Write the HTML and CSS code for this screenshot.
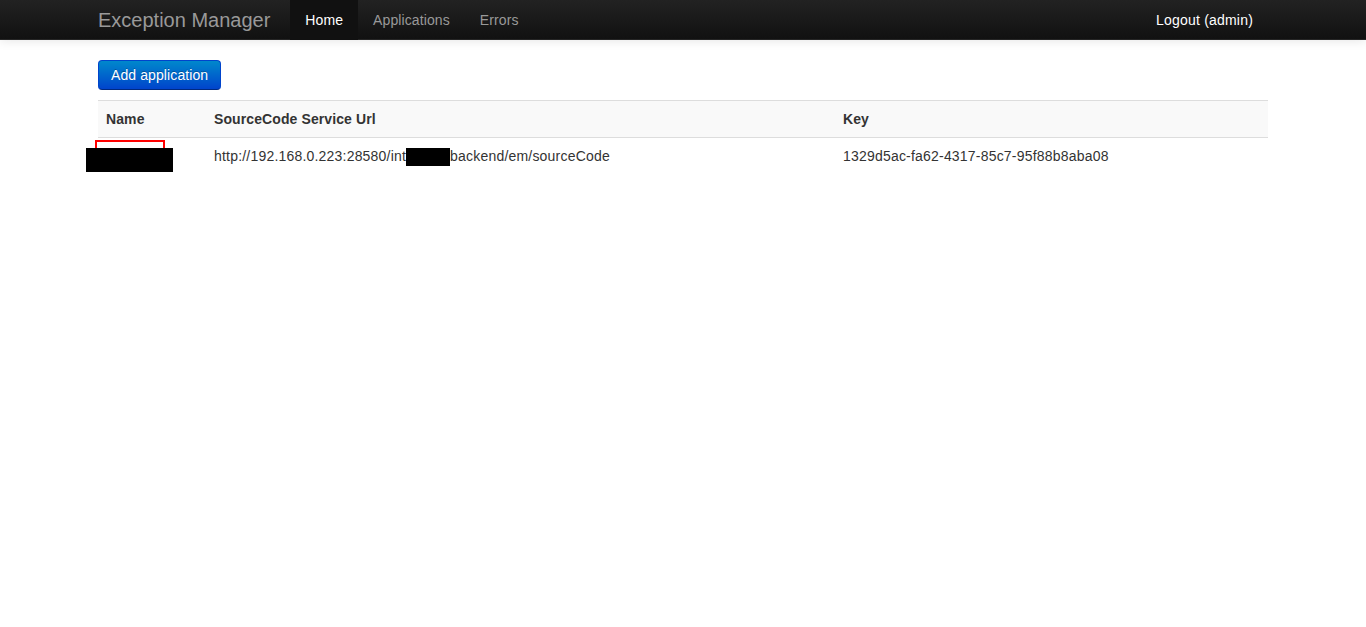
FILE: index.html
```html
<!DOCTYPE html>
<html lang="en">
<head>
    <meta charset="UTF-8">
    <title>Exception Manager - Applications</title>
    <link rel="stylesheet" href="styles.css">
</head>
<body>

    <header class="navbar">
        <div class="container navbar-inner">
            <a class="brand" href="#">Exception Manager</a>
            <ul class="nav">
                <li class="active"><a href="#">Home</a></li>
                <li><a href="#">Applications</a></li>
                <li><a href="#">Errors</a></li>
            </ul>
            <ul class="nav nav-right">
                <li><a href="#">Logout (admin)</a></li>
            </ul>
        </div>
    </header>

    <div class="container main">
        <button class="btn btn-primary">Add application</button>

        <table class="table">
            <thead>
                <tr>
                    <th class="col-name">Name</th>
                    <th class="col-url">SourceCode Service Url</th>
                    <th>Key</th>
                </tr>
            </thead>
            <tbody>
                <tr>
                    <td>
                        <span class="name-wrap">
                            <span class="mark"></span>
                            <span class="redact"></span>
                        </span>
                    </td>
                    <td>http://192.168.0.223:28580/int<span class="redact-inline"></span>backend/em/sourceCode</td>
                    <td>1329d5ac-fa62-4317-85c7-95f88b8aba08</td>
                </tr>
            </tbody>
        </table>
    </div>

</body>
</html>
```

FILE: styles.css
```css
* {
    margin: 0;
    padding: 0;
    box-sizing: border-box;
}

body {
    font-family: "Liberation Sans", Arial, sans-serif;
    font-size: 14px;
    line-height: 20px;
    letter-spacing: 0.2px;
    color: #333;
    background: #fff;
}

a {
    text-decoration: none;
}

.container {
    width: 1170px;
    margin: 0 auto;
}

/* navbar */
.navbar {
    height: 40px;
    background: linear-gradient(to bottom, #222, #111);
    border-bottom: 1px solid #252525;
    box-shadow: 0 1px 10px rgba(0, 0, 0, 0.1);
}

.navbar-inner {
    display: flex;
    align-items: stretch;
    height: 40px;
}

.brand {
    font-size: 20px;
    letter-spacing: 0;
    color: #999;
    padding: 10px 20px 10px 0;
    line-height: 20px;
}

.nav {
    list-style: none;
    display: flex;
    letter-spacing: 0.1px;
}

.nav li a {
    display: block;
    padding: 10px 15px;
    color: #999;
}

.nav li.active a {
    background-color: #111;
    color: #fff;
}

.nav-right {
    margin-left: auto;
    letter-spacing: 0.2px;
}

.nav-right li a {
    color: #fff;
}

/* content */
.main {
    padding-top: 20px;
}

.btn {
    font-family: inherit;
    font-size: 14px;
    line-height: 20px;
    letter-spacing: 0.1px;
    padding: 4px 12px;
    border-radius: 4px;
    cursor: pointer;
    margin-bottom: 10px;
}

.btn-primary {
    color: #fff;
    background: linear-gradient(to bottom, #0088cc, #0044cc);
    border: 1px solid #0044cc;
    border-bottom-color: #002a80;
    text-shadow: 0 -1px 0 rgba(0, 0, 0, 0.25);
}

.table {
    width: 100%;
    border-collapse: collapse;
}

.table th,
.table td {
    padding: 8px;
    text-align: left;
    vertical-align: top;
    border-top: 1px solid #ddd;
}

.table thead th {
    background-color: #f9f9f9;
    font-weight: bold;
    letter-spacing: 0.1px;
}

.col-name {
    width: 108px;
}

.col-url {
    width: 629px;
}

/* redacted bits */
.name-wrap {
    display: block;
    position: relative;
    height: 20px;
}

.mark {
    position: absolute;
    left: -11px;
    top: -6px;
    width: 70px;
    height: 20px;
    border: 2px solid #f00;
}

.redact {
    position: absolute;
    left: -20px;
    top: 2px;
    width: 87px;
    height: 24px;
    background: #000;
}

.redact-inline {
    display: inline-block;
    width: 44px;
    height: 18px;
    background: #000;
    vertical-align: -5px;
}
```
